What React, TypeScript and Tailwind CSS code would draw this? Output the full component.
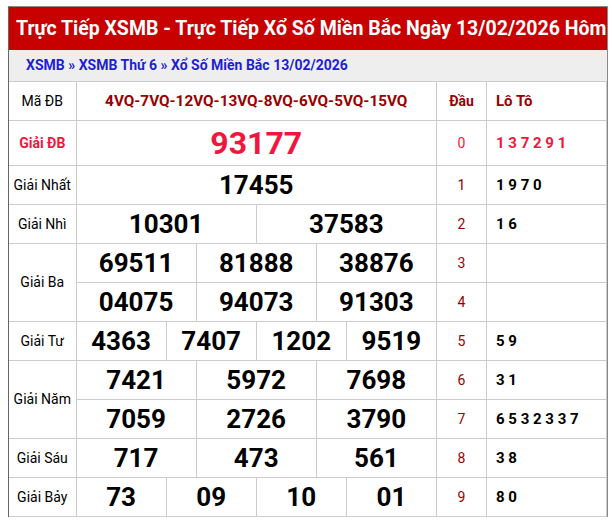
const COLS = 12;

type Line = { nums: string[]; dau: string; loto: string };
type Prize = { label: string; lines: Line[]; special?: boolean };

const PRIZES: Prize[] = [
  { label: "Giải ĐB", special: true, lines: [{ nums: ["93177"], dau: "0", loto: "1 3 7 2 9 1" }] },
  { label: "Giải Nhất", lines: [{ nums: ["17455"], dau: "1", loto: "1 9 7 0" }] },
  { label: "Giải Nhì", lines: [{ nums: ["10301", "37583"], dau: "2", loto: "1 6" }] },
  {
    label: "Giải Ba",
    lines: [
      { nums: ["69511", "81888", "38876"], dau: "3", loto: "" },
      { nums: ["04075", "94073", "91303"], dau: "4", loto: "" },
    ],
  },
  { label: "Giải Tư", lines: [{ nums: ["4363", "7407", "1202", "9519"], dau: "5", loto: "5 9" }] },
  {
    label: "Giải Năm",
    lines: [
      { nums: ["7421", "5972", "7698"], dau: "6", loto: "3 1" },
      { nums: ["7059", "2726", "3790"], dau: "7", loto: "6 5 3 2 3 3 7" },
    ],
  },
  { label: "Giải Sáu", lines: [{ nums: ["717", "473", "561"], dau: "8", loto: "3 8" }] },
  { label: "Giải Bảy", lines: [{ nums: ["73", "09", "10", "01"], dau: "9", loto: "8 0" }] },
];

const cell = "border border-[#cccccc] p-0";

export default function App() {
  return (
    <div className="min-h-[522px] bg-white pt-[6px] font-['Roboto',sans-serif]">
      <div className="ml-[8px] w-[600px] border-l border-r border-t border-l-[#666666] border-r-[#888888] border-t-[#888888]">
        <div className="flex h-[43px] items-center whitespace-nowrap bg-[#c80000] pl-[7px] text-[19.5px] font-bold text-white">
          Trực Tiếp XSMB - Trực Tiếp Xổ Số Miền Bắc Ngày 13/02/2026 Hôm
        </div>
        <div className="flex h-[31px] items-center bg-[#eeeeee] pl-[17px] text-[14px] font-bold text-[#1f1fcf]">
          XSMB » XSMB Thứ 6 » Xổ Số Miền Bắc 13/02/2026
        </div>
        <table className="w-full table-fixed border-collapse">
          <colgroup>
            <col className="w-[67px]" />
            {Array.from({ length: COLS }).map((_, i) => (
              <col key={i} />
            ))}
            <col className="w-[50px]" />
            <col className="w-[120px]" />
          </colgroup>
          <tbody>
            <tr className="h-[39px]">
              <td className={`${cell} border-l-0 text-center text-[14px] text-black`}>Mã ĐB</td>
              <td colSpan={COLS} className={`${cell} text-center text-[15.3px] font-bold text-[#990000]`}>
                4VQ-7VQ-12VQ-13VQ-8VQ-6VQ-5VQ-15VQ
              </td>
              <td className={`${cell} text-center text-[14px] font-bold text-[#990000]`}>Đầu</td>
              <td className={`${cell} pl-[9px] text-[15px] font-bold text-[#990000]`}>Lô Tô</td>
            </tr>
            {PRIZES.map((p) =>
              p.lines.map((line, li) => (
                <tr key={p.label + li} className={p.special ? "h-[45px]" : "h-[39px]"}>
                  {li === 0 && (
                    <td
                      rowSpan={p.lines.length}
                      className={`${cell} border-l-0 text-center text-[14px] ${
                        p.special ? "font-bold text-[#f2163e]" : "text-black"
                      }`}
                    >
                      {p.label}
                    </td>
                  )}
                  {line.nums.map((n) => (
                    <td
                      key={n}
                      colSpan={COLS / line.nums.length}
                      className={`${cell} text-center font-bold leading-none ${
                        p.special ? "text-[32px] text-[#f2163e]" : "text-[26px] text-black"
                      }`}
                    >
                      {n}
                    </td>
                  ))}
                  <td
                    className={`${cell} text-center text-[14px] ${
                      p.special ? "text-[#f2163e]" : "text-[#990000]"
                    }`}
                  >
                    {line.dau}
                  </td>
                  <td
                    className={`${cell} whitespace-pre pl-[9px] text-[15px] font-bold ${
                      p.special ? "text-[#f2163e]" : "text-black"
                    }`}
                  >
                    {line.loto}
                  </td>
                </tr>
              ))
            )}
          </tbody>
        </table>
      </div>
    </div>
  );
}
